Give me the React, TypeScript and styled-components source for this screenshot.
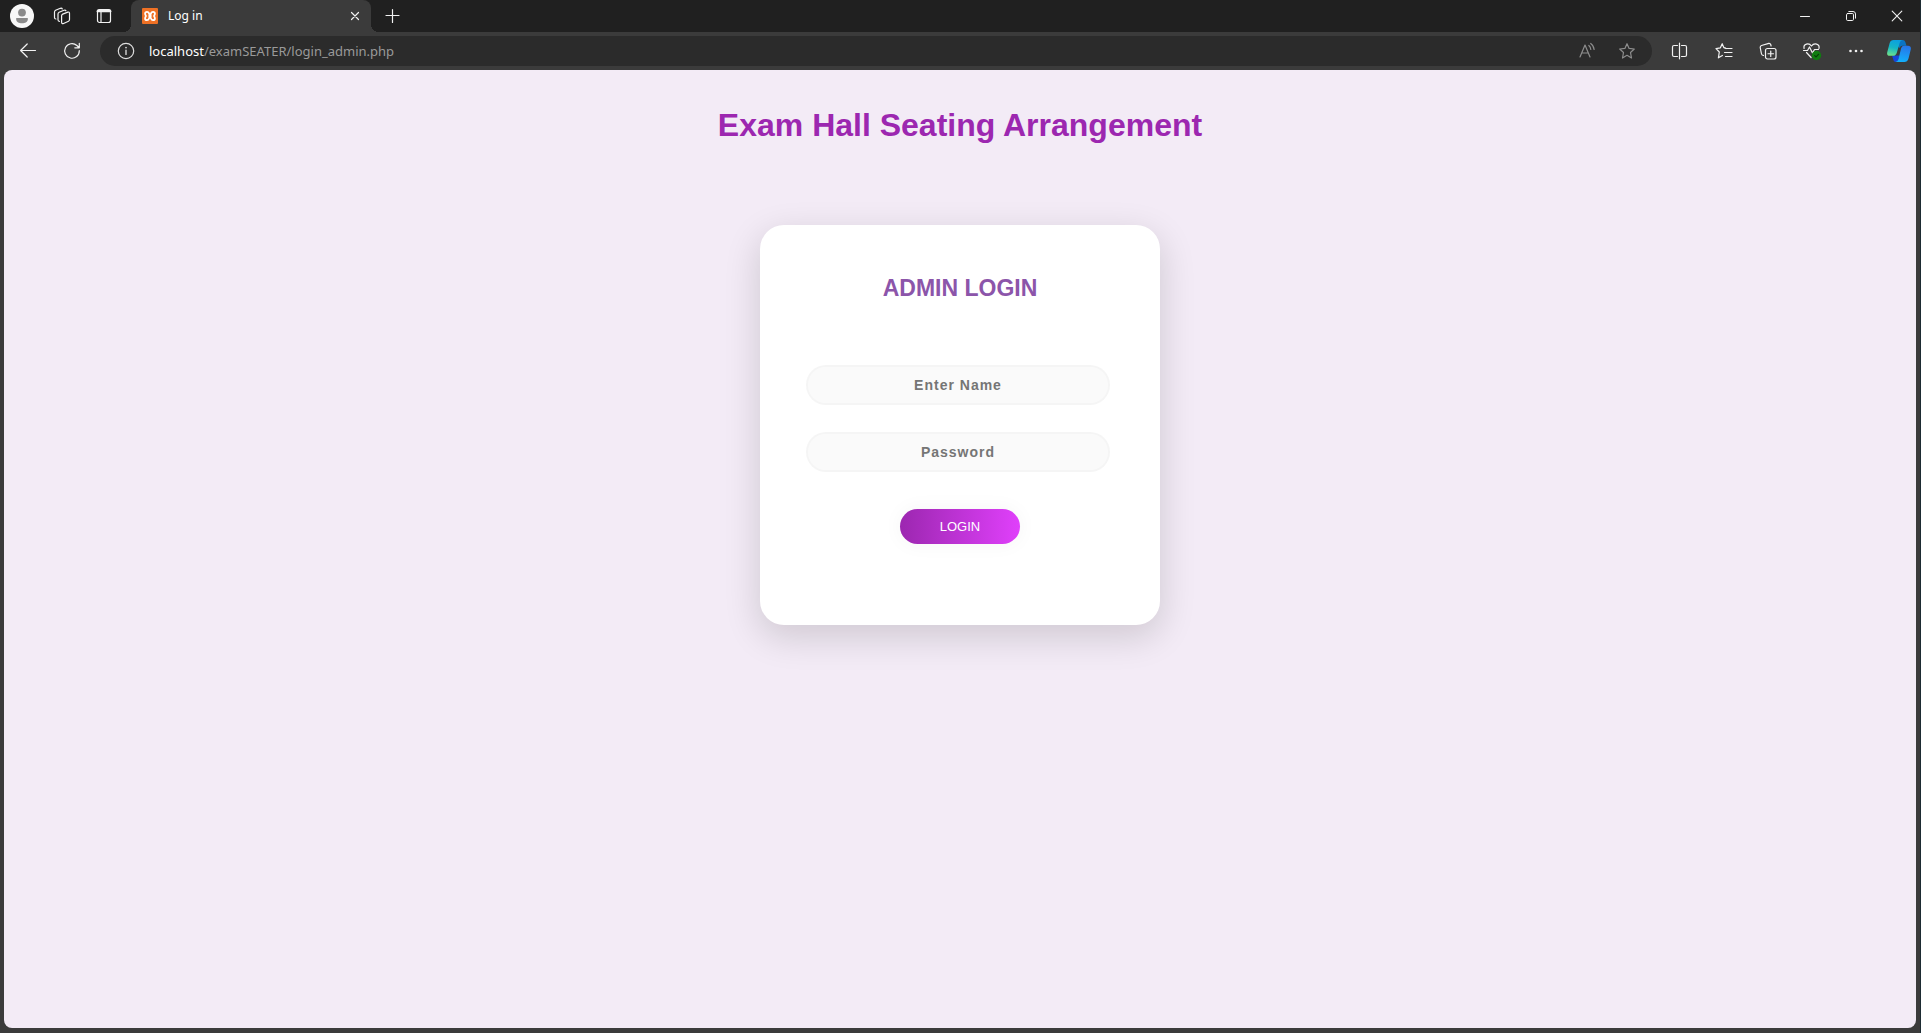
import React from "react";
import styled, { createGlobalStyle } from "styled-components";

const GlobalStyle = createGlobalStyle`
  *, *::before, *::after { box-sizing: border-box; }
  body { margin: 0; background: #3b3b3b; }
  button { font-family: inherit; }
`;

const uiFont = `"Noto Sans", "Open Sans", sans-serif`;
const pageFont = `"Liberation Sans", Arial, sans-serif`;

const Window = styled.div`
  display: flex;
  flex-direction: column;
  min-height: 100vh;
  background: #3b3b3b;
  border-right: 1px solid #1e2c33;
  font-family: ${uiFont};
`;

const TabStrip = styled.header`
  display: flex;
  align-items: stretch;
  height: 32px;
  background: #202020;
`;

const IconButton = styled.button<{ $width?: number; $color?: string }>`
  display: flex;
  flex: none;
  align-items: center;
  justify-content: center;
  width: ${(p) => p.$width ?? 44}px;
  padding: 0;
  border: 0;
  background: transparent;
  color: ${(p) => p.$color ?? "#f2f2f2"};
  svg { display: block; }
`;

const Tab = styled.div`
  position: relative;
  display: flex;
  align-items: center;
  gap: 10px;
  width: 240px;
  padding: 0 0 0 11px;
  border-radius: 8px 8px 0 0;
  background: #3b3b3b;
  color: #fff;
  font-size: 12px;
  line-height: 16px;

  &::before, &::after {
    content: "";
    position: absolute;
    bottom: 0;
    width: 8px;
    height: 8px;
  }
  &::before {
    right: 100%;
    background: radial-gradient(circle at 0 0, #202020 8px, #3b3b3b 8px);
  }
  &::after {
    left: 100%;
    background: radial-gradient(circle at 100% 0, #202020 8px, #3b3b3b 8px);
  }
`;

const TabTitle = styled.span`
  flex: 1;
`;

const Spacer = styled.div`
  flex: 1;
`;

const TabTools = styled.div`
  display: flex;
  width: 131px;
  padding-left: 2px;
`;

const Toolbar = styled.nav`
  display: flex;
  align-items: stretch;
  height: 38px;
  padding: 4px 0;
`;

const BackGroup = styled.div`
  display: flex;
  width: 100px;
  padding-left: 6px;
`;

const AddressBar = styled.div`
  display: flex;
  flex: 1;
  align-items: center;
  border-radius: 15px;
  background: #2b2b2b;
  padding: 0 5px 0 4px;
`;

const Url = styled.div`
  flex: 1;
  padding-left: 1px;
  color: #9a9a9a;
  font-size: 13px;
  line-height: 20px;
  b { color: #fff; font-weight: 400; }
`;

const ToolGroup = styled.div`
  display: flex;
  padding-left: 6px;
`;

const Page = styled.main`
  display: flex;
  flex: 1;
  flex-direction: column;
  align-items: center;
  gap: 81px;
  margin: 0 4px 5px;
  padding: 37px 16px;
  border-radius: 8px;
  background: #f3ebf6;
  font-family: ${pageFont};
`;

const Title = styled.h1`
  margin: 0;
  color: #9c27b0;
  font-size: 32px;
  line-height: 37px;
  text-align: center;
`;

const Card = styled.form`
  display: flex;
  flex-direction: column;
  width: 400px;
  max-width: 100%;
  padding: 50px 0 81px;
  border-radius: 24px;
  background: #fff;
  box-shadow: 0 11px 35px 2px rgba(0, 0, 0, 0.14);
`;

const CardTitle = styled.h2`
  margin: 0 0 64px;
  color: #8c55aa;
  font-size: 23px;
  line-height: 26px;
  text-align: center;
`;

const Field = styled.input`
  width: 76%;
  height: 40px;
  margin: 0 0 27px 46px;
  padding: 10px 20px;
  border: 2px solid rgba(0, 0, 0, 0.02);
  border-radius: 20px;
  outline: none;
  background: rgba(136, 126, 126, 0.04);
  color: #263238;
  font-family: ${pageFont};
  font-size: 14px;
  font-weight: 700;
  letter-spacing: 1px;
  text-align: center;
  &::placeholder { color: #757575; }
`;

const LoginButton = styled.button`
  align-self: center;
  margin-top: 10px;
  padding: 10px 40px;
  border: 0;
  border-radius: 18px;
  background: linear-gradient(to right, #9c27b0, #e040fb);
  box-shadow: 0 0 20px 1px rgba(0, 0, 0, 0.04);
  color: #fff;
  font-family: ${pageFont};
  font-size: 13px;
  line-height: 15px;
`;

type GlyphProps = { size?: number; children: React.ReactNode };

const Glyph = ({ size = 18, children }: GlyphProps) => (
  <svg
    width={size}
    height={size}
    viewBox={`0 0 ${size} ${size}`}
    fill="none"
    stroke="currentColor"
    strokeWidth="1.2"
    strokeLinecap="round"
    strokeLinejoin="round"
    aria-hidden="true"
  >
    {children}
  </svg>
);

const Avatar = () => (
  <svg width="24" height="24" viewBox="0 0 24 24" aria-hidden="true">
    <circle cx="12" cy="12" r="12" fill="#f7f7f7" />
    <circle cx="12" cy="8.6" r="3.9" fill="#8a8a8a" />
    <path d="M6.2 14h11.6v1.2c0 2.6-2.6 4-5.8 4s-5.8-1.4-5.8-4z" fill="#8a8a8a" />
  </svg>
);

const Workspaces = () => (
  <Glyph>
    <path d="M8.600 8.800Q8.600 7.600 9.700 7.100L14.800 5.100Q16.500 4.600 16.500 6.300V12.500Q16.500 13.600 15.500 14.200L10.600 16.500Q8.600 17.200 8.600 15.300Z" />
    <path d="M6.400 14.400Q5 14.300 5 12.800V6.900Q5 5.700 6.100 5.200L11 3.200Q12.500 2.700 12.900 3.800" />
    <path d="M2.900 12Q1.500 11.900 1.500 10.400V5Q1.500 3.800 2.600 3.300L7.400 1.300Q8.900 .9 9.300 2" />
  </Glyph>
);

const TabActions = () => (
  <Glyph>
    <rect x="2.500" y="2.500" width="13" height="13" rx="2" />
    <path d="M2.500 4.300h13M3 3.500h12" strokeWidth="2" />
    <path d="M6 5v10.500" />
  </Glyph>
);

const Favicon = () => (
  <svg width="16" height="16" viewBox="0 0 16 16" aria-hidden="true">
    <rect width="16" height="16" rx="1" fill="#ee7125" />
    <path
      d="M8 8 6.900 5.200Q6.400 3.900 5 3.900 3.100 3.900 3.100 5.600 3.100 6.800 4 8 3.100 9.200 3.100 10.400 3.100 12.100 5 12.100 6.400 12.100 6.900 10.800L8 8 9.100 5.200Q9.600 3.900 11 3.900 12.900 3.900 12.900 5.600 12.900 6.800 12 8 12.900 9.200 12.900 10.400 12.900 12.100 11 12.100 9.600 12.100 9.100 10.800Z"
      fill="none"
      stroke="#fff"
      strokeWidth="1.800"
      strokeLinejoin="round"
    />
    <path d="M6.500 8h3" stroke="#fff" strokeWidth="2" />
  </svg>
);

const CloseTab = () => (
  <Glyph size={10}><path d="m1.500 1.500 7 7m0-7-7 7" /></Glyph>
);

const Plus = () => (
  <Glyph size={16}><path d="M7.500 1.500v13M1 7.500h13" /></Glyph>
);

const Minimize = () => (
  <Glyph size={12}><path d="M1.500 6.500h9" strokeWidth="1" /></Glyph>
);

const Restore = () => (
  <Glyph size={12}>
    <rect x="1.500" y="3.500" width="7" height="7" rx="1.200" strokeWidth="1" />
    <path d="M3.800 1.500H8q2.500 0 2.500 2.500v4.200" strokeWidth="1" />
  </Glyph>
);

const CloseWindow = () => (
  <Glyph size={12}><path d="m1.200 1.200 9.600 9.600m0-9.600-9.600 9.600" strokeWidth="1.100" /></Glyph>
);

const Back = () => (
  <Glyph><path d="M16.500 8.500H1.700M8.200 2 1.600 8.500 8.200 15" /></Glyph>
);

const Refresh = () => (
  <Glyph><path d="M16.300 8.700a7.300 7.300 0 1 1-2.400-5.200l2 2M16.300 1.300v4.500h-4.500" /></Glyph>
);

const Info = () => (
  <Glyph>
    <circle cx="9" cy="9" r="7.700" stroke="#dedede" />
    <path d="M9 8v4.500" />
    <path d="M9 5.600v.1" strokeWidth="1.500" />
  </Glyph>
);

const ReadAloud = () => (
  <Glyph>
    <path d="M2 15 7 3l5 12M3.700 11h6.600M10.800 3.500q1.700 1.200 2 4M12.700 1.500q3 2 3.400 6" />
  </Glyph>
);

const starPath =
  "M9 1.700 11.100 6.400 16.300 7 12.500 10.500 13.500 16 9 13.300 4.500 16 5.500 10.500 1.700 7 6.900 6.400Z";

const Star = () => (
  <Glyph><path d={starPath} /></Glyph>
);

const SplitScreen = () => (
  <Glyph>
    <path d="M6.500 3.500H3Q1.500 3.500 1.500 5v8Q1.500 14.500 3 14.500h3.500M10.500 3.500H14q1.500 0 1.500 1.500v8q0 1.500-1.500 1.500h-3.500M8.500 1.200v15.600" />
  </Glyph>
);

const Favorites = () => (
  <Glyph>
    <path d="M9.800 5.800 8.900 5.700 7.200 1.700 5.400 5.800 1 6.600l3.300 3.400-.9 5.800 4-2.300M11 6.500h6M9.500 10.500H17M10.500 14.500H17" />
    <path d="m9.800 5.800 1.200.7" />
  </Glyph>
);

const Collections = () => (
  <Glyph>
    <rect x="6.500" y="6.500" width="10.500" height="10.500" rx="2" />
    <path d="M11.750 9v5.500M9 11.750h5.500M4.500 13.500 3.300 13Q2.600 12.500 2.400 11.500L1.200 5.500Q1.100 4 2.500 3.500l7.300-2.100Q11.200 1.200 11.700 2.500l.4 1.500" />
  </Glyph>
);

const Performance = () => (
  <Glyph size={20}>
    <path d="M2.100 7.500C1 2.500 7 1.500 9.500 5 12 1.500 18 2.500 17 7.500M4.500 11.500l4.600 5M1.500 9.500h4l2-3.500 3 6 2-3.500h4" />
    <circle cx="14.500" cy="14.500" r="4.700" fill="#107c10" stroke="none" />
    <path d="m12.700 14.600 1.300 1.300 2.500-2.600" stroke="#073f07" />
  </Glyph>
);

const More = () => (
  <svg width="18" height="18" viewBox="0 0 18 18" fill="currentColor" aria-hidden="true">
    <circle cx="3.500" cy="9" r="1.300" />
    <circle cx="9" cy="9" r="1.300" />
    <circle cx="14.500" cy="9" r="1.300" />
  </svg>
);

const Copilot = () => (
  <svg width="24" height="24" viewBox="0 0 24 24" aria-hidden="true">
    <defs>
      <linearGradient id="copilotLeft" x1=".6" y1="0" x2=".35" y2="1">
        <stop offset="0" stopColor="#0c9fe0" />
        <stop offset=".5" stopColor="#14b5c6" />
        <stop offset="1" stopColor="#6be08c" />
      </linearGradient>
      <linearGradient id="copilotRight" x1=".6" y1="0" x2=".4" y2="1">
        <stop offset="0" stopColor="#2874e8" />
        <stop offset="1" stopColor="#12b1fb" />
      </linearGradient>
    </defs>
    <path d="M12 1h3.700q2 0 2.600 1.900l1.200 3.800h-4.300q-1.800 0-2.500 2.300L9.500 6z" fill="#0a74c4" />
    <path d="M5 16.500h7.500L11.300 21q-.6 2-2.500 2Q7 23 6.500 21.200z" fill="#1744d8" />
    <path d="M6.700 1H15.500q-2 .3-2.700 2.500L9.800 13.700q-.9 3.100-3.800 3.100H2.700Q-.6 16.800.3 13L2.600 4.200Q3.500 1 6.700 1Z" fill="url(#copilotLeft)" />
    <path d="M17.300 6.700H21q3.600 0 2.700 4L21.500 19.500Q20.500 23 17.300 23H8.500q2.300-.3 3-3L14.200 9q.7-2.300 3.100-2.300Z" fill="url(#copilotRight)" />
  </svg>
);

export default function App() {
  return (
    <>
      <GlobalStyle />
      <Window>
        <TabStrip>
          <TabTools>
            <IconButton $width={40} aria-label="Profile"><Avatar /></IconButton>
            <IconButton $width={40} aria-label="Workspaces"><Workspaces /></IconButton>
            <IconButton aria-label="Tab actions"><TabActions /></IconButton>
          </TabTools>
          <Tab>
            <Favicon />
            <TabTitle>Log in</TabTitle>
            <IconButton $width={32} aria-label="Close tab"><CloseTab /></IconButton>
          </Tab>
          <IconButton aria-label="New tab"><Plus /></IconButton>
          <Spacer />
          <IconButton $width={46} aria-label="Minimize"><Minimize /></IconButton>
          <IconButton $width={46} aria-label="Restore"><Restore /></IconButton>
          <IconButton $width={46} aria-label="Close"><CloseWindow /></IconButton>
        </TabStrip>

        <Toolbar>
          <BackGroup>
            <IconButton aria-label="Back"><Back /></IconButton>
            <IconButton aria-label="Refresh"><Refresh /></IconButton>
          </BackGroup>
          <AddressBar>
            <IconButton aria-label="Site information"><Info /></IconButton>
            <Url><b>localhost</b>/examSEATER/login_admin.php</Url>
            <IconButton $width={40} $color="#8d8d8d" aria-label="Read aloud"><ReadAloud /></IconButton>
            <IconButton $width={40} $color="#8d8d8d" aria-label="Add to favorites"><Star /></IconButton>
          </AddressBar>
          <ToolGroup>
            <IconButton aria-label="Split screen"><SplitScreen /></IconButton>
            <IconButton aria-label="Favorites"><Favorites /></IconButton>
            <IconButton aria-label="Collections"><Collections /></IconButton>
            <IconButton aria-label="Browser essentials"><Performance /></IconButton>
            <IconButton aria-label="More"><More /></IconButton>
            <IconButton $width={42} aria-label="Copilot"><Copilot /></IconButton>
          </ToolGroup>
        </Toolbar>

        <Page>
          <Title>Exam Hall Seating Arrangement</Title>
          <Card onSubmit={(e) => e.preventDefault()}>
            <CardTitle>ADMIN LOGIN</CardTitle>
            <Field type="text" placeholder="Enter Name" aria-label="Enter Name" />
            <Field type="password" placeholder="Password" aria-label="Password" />
            <LoginButton type="submit">LOGIN</LoginButton>
          </Card>
        </Page>
      </Window>
    </>
  );
}
